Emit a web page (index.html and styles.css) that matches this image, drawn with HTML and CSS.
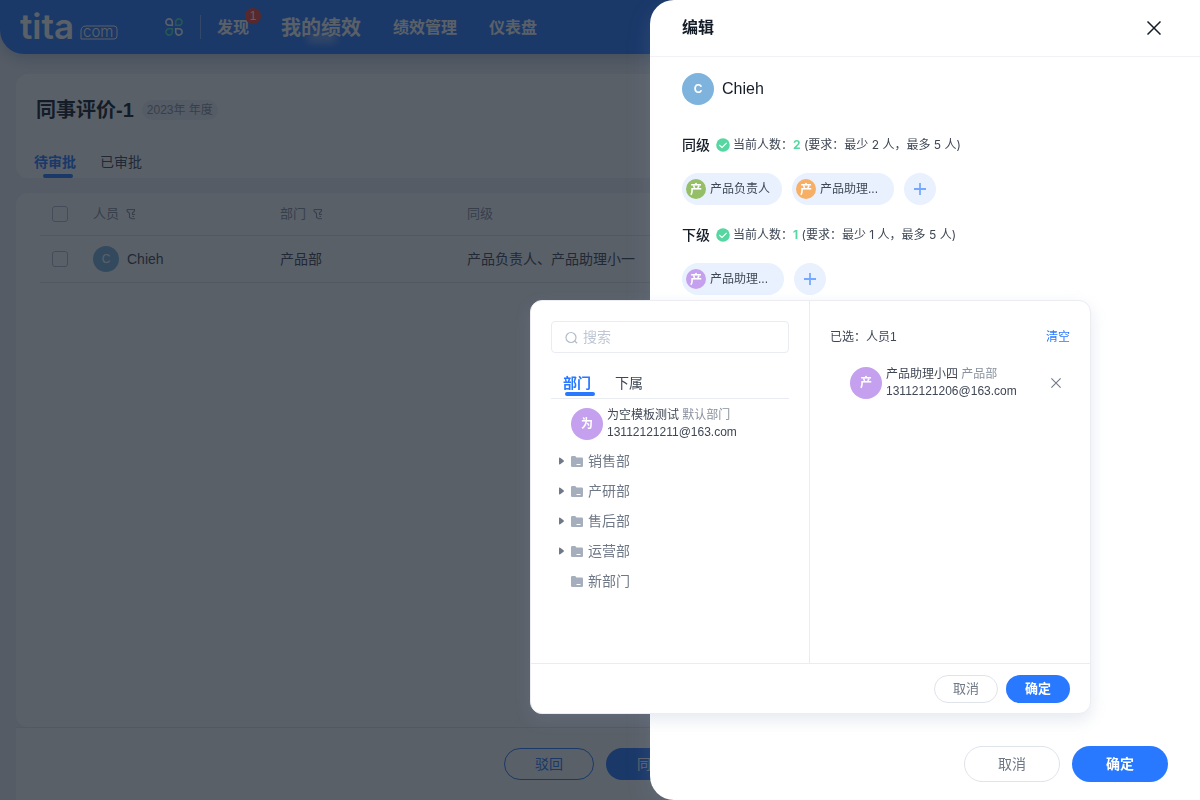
FILE: index.html
```
<!DOCTYPE html>
<html lang="zh-CN">
<head>
<meta charset="utf-8">
<meta name="viewport" content="width=device-width, initial-scale=1">
<title>同事评价</title>
<link rel="stylesheet" href="styles.css">
</head>
<body>
<svg class="sprite" aria-hidden="true">
  <symbol id="filter" viewBox="0 0 10 12"><path d="M1 1.500h7.500v1.500L6.500 5V6.500H9M1 1.500v1.500l2.500 2.500v4l2.500 1.200H9M6.500 8.500H8" fill="none" stroke="currentColor" stroke-width="1.100"/></symbol>
  <symbol id="plus" viewBox="0 0 12 12"><path d="M6 0v12M0 6h12" fill="none" stroke="currentColor" stroke-width="1.800"/></symbol>
  <symbol id="cross" viewBox="0 0 14 14"><path d="M.5.5l13 13M13.500.5l-13 13" fill="none" stroke="currentColor" stroke-width="1.500"/></symbol>
  <symbol id="check" viewBox="0 0 14 14"><circle cx="7" cy="7" r="6.800" fill="#56d7a2"/><path d="M3.300 7l2.700 2.500 4.700-4.700" fill="none" stroke="#fff" stroke-width="1.100"/></symbol>
  <symbol id="folder" viewBox="0 0 12 11"><path d="M0 1.200Q0 0 1.200 0h2.600q.6 0 1 .6l.6.9h5.400Q12 1.500 12 2.700v7.100Q12 11 10.800 11H1.200Q0 11 0 9.800z" fill="#a5aebc"/><path d="M5.500 8.500H9.500" stroke="#fff" stroke-width="1"/></symbol>
  <symbol id="caret" viewBox="0 0 5 8"><path d="M0 1.500Q0 0 1.200.8l3.300 2.400q.8.800 0 1.600L1.200 7.200Q0 8 0 6.500z" fill="#6f7886"/></symbol>
</svg>

<div class="app">
  <header class="topbar">
    <svg class="logo" width="100" height="46" viewBox="0 0 100 46" role="img" aria-label="tita.com">
      <text class="logo-name" x="0" y="35">tita</text>
      <path d="M61 35V27q0-5 5-5h28q3 0 3 3v7q0 3-3 3z" fill="none" stroke="#fff" stroke-width="1"/>
      <text class="logo-com" x="63" y="33">com</text>
    </svg>
    <button class="apps" aria-label="应用">
      <svg width="18" height="18" viewBox="0 0 18 18" fill="none" stroke-width="1.600">
        <path d="M7.300 7.300H4.200A3.200 3.200 0 1 1 7.300 4.200z" stroke="#fff"/>
        <path d="M10.700 7.300V4.200a3.200 3.200 0 1 1 3.200 3.100z" stroke="#4fe0c0"/>
        <path d="M7.300 10.700v3.100a3.200 3.200 0 1 1-3.100-3.100z" stroke="#4fe0c0"/>
        <path d="M10.700 10.700h3.200a3.200 3.200 0 1 1-3.200 3.100z" stroke="#fff"/>
      </svg>
    </button>
    <nav class="nav">
      <a href="#">发现<span class="badge">1</span></a>
      <a href="#" class="current">我的绩效</a>
      <a href="#">绩效管理</a>
      <a href="#">仪表盘</a>
    </nav>
  </header>

  <main class="page">
    <section class="card heading">
      <div class="title-row"><h1>同事评价-1</h1><span class="period">2023年 年度</span></div>
      <div class="tabs">
        <button class="tab active">待审批</button>
        <button class="tab">已审批</button>
      </div>
    </section>
    <section class="card list">
      <table>
        <colgroup><col class="col-check"><col class="col"><col class="col"><col></colgroup>
        <thead><tr>
          <th><input type="checkbox" aria-label="全选"></th>
          <th>人员<svg class="filter" width="10" height="12"><use href="#filter"/></svg></th>
          <th>部门<svg class="filter" width="10" height="12"><use href="#filter"/></svg></th>
          <th>同级</th>
        </tr></thead>
        <tbody><tr>
          <td><input type="checkbox" aria-label="选择 Chieh"></td>
          <td><span class="person"><span class="avatar blue small">C</span>Chieh</span></td>
          <td>产品部</td>
          <td>产品负责人、产品助理小一</td>
        </tr></tbody>
      </table>
    </section>
    <footer class="actions">
      <button class="btn outline">驳回</button>
      <button class="btn solid">同意</button>
    </footer>
  </main>
</div>

<div class="mask">
<aside class="drawer" role="dialog" aria-labelledby="drawer-title">
  <header class="drawer-head">
    <h2 id="drawer-title">编辑</h2>
    <button class="close" aria-label="关闭"><svg width="14" height="14"><use href="#cross"/></svg></button>
  </header>
  <div class="drawer-body">
    <div class="owner"><span class="avatar blue">C</span>Chieh</div>
    <section class="level">
      <div class="level-head"><h3>同级</h3><svg width="14" height="14"><use href="#check"/></svg><p>当前人数：<b>2</b> (要求：最少 2 人，最多 5 人)</p></div>
      <div class="chips">
        <span class="chip"><span class="avatar green tiny">产</span>产品负责人</span>
        <span class="chip cut"><span class="avatar orange tiny">产</span>产品助理...</span>
        <button class="add" aria-label="添加同级"><svg width="12" height="12"><use href="#plus"/></svg></button>
      </div>
    </section>
    <section class="level">
      <div class="level-head"><h3>下级</h3><svg width="14" height="14"><use href="#check"/></svg><p>当前人数：<b>1</b> (要求：最少 1 人，最多 5 人)</p></div>
      <div class="chips">
        <span class="chip cut"><span class="avatar purple tiny">产</span>产品助理...</span>
        <button class="add" aria-label="添加下级"><svg width="12" height="12"><use href="#plus"/></svg></button>
      </div>
    </section>
  </div>
  <footer class="drawer-foot">
    <button class="btn plain">取消</button>
    <button class="btn solid">确定</button>
  </footer>
</aside>
</div>

<div class="picker" role="dialog" aria-label="选择人员">
  <div class="picker-main">
    <div class="source">
      <label class="search">
        <svg width="13" height="13" viewBox="0 0 13 13" fill="none" stroke="#b4bccb" stroke-width="1.200"><circle cx="6" cy="6.500" r="5"/><path d="M9.700 10l2.500 2.300"/></svg>
        <input type="text" placeholder="搜索" aria-label="搜索">
      </label>
      <div class="picker-tabs">
        <button class="tab active">部门</button>
        <button class="tab">下属</button>
      </div>
      <div class="member">
        <span class="avatar purple">为</span>
        <div class="info"><div>为空模板测试 <span>默认部门</span></div><div>13112121211@163.com</div></div>
      </div>
      <ul class="tree">
        <li><svg class="caret" width="5" height="8"><use href="#caret"/></svg><svg width="12" height="11"><use href="#folder"/></svg>销售部</li>
        <li><svg class="caret" width="5" height="8"><use href="#caret"/></svg><svg width="12" height="11"><use href="#folder"/></svg>产研部</li>
        <li><svg class="caret" width="5" height="8"><use href="#caret"/></svg><svg width="12" height="11"><use href="#folder"/></svg>售后部</li>
        <li><svg class="caret" width="5" height="8"><use href="#caret"/></svg><svg width="12" height="11"><use href="#folder"/></svg>运营部</li>
        <li class="leaf"><svg width="12" height="11"><use href="#folder"/></svg>新部门</li>
      </ul>
    </div>
    <div class="chosen">
      <div class="chosen-head"><span>已选：人员1</span><button class="clear">清空</button></div>
      <div class="member">
        <span class="avatar purple">产</span>
        <div class="info"><div>产品助理小四 <span>产品部</span></div><div>13112121206@163.com</div></div>
        <button class="remove" aria-label="移除"><svg width="10" height="10"><use href="#cross"/></svg></button>
      </div>
    </div>
  </div>
  <footer class="picker-foot">
    <button class="btn plain">取消</button>
    <button class="btn solid">确定</button>
  </footer>
</div>
</body>
</html>
```

FILE: styles.css
```
* { box-sizing: border-box; }
body {
  margin: 0;
  font: 14px/20px "Liberation Sans", "Noto Sans CJK SC", sans-serif;
  color: #3f4755;
  background: #f0f2f5;
  overflow: hidden;
}
h1, h2, h3, p, ul { margin: 0; padding: 0; }
button { font: inherit; color: inherit; background: none; border: 0; padding: 0; cursor: pointer; }
svg { display: block; flex: none; }
.sprite { position: absolute; width: 0; height: 0; }

.app { height: 100vh; display: flex; flex-direction: column; }
.topbar {
  flex: none;
  height: 54px;
  display: flex;
  align-items: center;
  padding-left: 20px;
  background: #2879ff;
  border-radius: 0 0 24px 24px;
  box-shadow: 0 4px 16px rgba(40, 80, 160, .3);
}
.logo { fill: #fff; }
.logo-name { font: 600 35px Inter, sans-serif; }
.logo-com { font: 300 15px Inter, sans-serif; }
.apps { margin-left: 45px; padding-right: 17px; border-right: 1px solid rgba(255, 255, 255, .4); height: 24px; }
.nav { display: flex; align-items: center; gap: 32px; margin-left: 16px; padding-top: 2px; }
.nav a { position: relative; color: #fff; text-decoration: none; font-size: 16px; font-weight: 700; }
.nav .current { font-size: 20px; }
.current::after {
  content: ""; position: absolute; left: 26px; bottom: -4px;
  width: 30px; height: 8px; border-radius: 4px;
  background: rgba(255, 255, 255, .5); filter: blur(4px);
}
.badge {
  position: absolute; top: -10px; right: -12px;
  width: 16px; height: 16px;
  border-radius: 50%;
  background: #f5483b;
  font-size: 12px; line-height: 16px; font-weight: 400; text-align: center;
}

.page { flex: 1; display: flex; flex-direction: column; padding: 20px 16px 0; min-height: 0; }
.card { background: #fff; border-radius: 12px; }
.heading { padding: 22px 20px 0; margin-bottom: 15px; }
.title-row { display: flex; align-items: center; gap: 8px; }
h1 { font-size: 20px; line-height: 28px; font-weight: 600; color: #141c28; }
.period { padding: 0 5px; line-height: 20px; border-radius: 10px; font-size: 12px; background: #f0f2f5; color: #89919f; }
.tabs { display: flex; gap: 24px; margin: 28px 0 0 -2px; }
.tab { position: relative; padding-bottom: 6px; line-height: 20px; }
.tab.active { color: #2879ff; font-weight: 700; }
.tab.active::after {
  content: ""; position: absolute; bottom: 0; left: 50%;
  width: 30px; height: 4px; margin-left: -12px;
  border-radius: 2px; background: #2879ff;
}
.list { flex: 1; padding: 0 24px; overflow: hidden; }
table { width: 100%; table-layout: fixed; border-collapse: collapse; }
.col-check { width: 53px; }
.col { width: 187px; }
th, td { padding: 0; text-align: left; border-bottom: 1px solid #e1e6ee; }
th { height: 42px; font-weight: 400; font-size: 13px; color: #89919f; }
td { height: 47px; color: #3f4755; }
th input, td input { appearance: none; display: block; margin: 0 0 0 12px; width: 16px; height: 16px; border: 1px solid #b4bccb; border-radius: 3px; }
.filter { display: inline-block; margin-left: 7px; vertical-align: -2px; }
.person { display: flex; align-items: center; gap: 8px; }
.actions {
  flex: none;
  height: 73px;
  display: flex;
  justify-content: center;
  align-items: center;
  gap: 12px;
  background: #fff;
  border-top: 1px solid #e1e6ee;
}
.btn { border-radius: 18px; text-align: center; }
.solid { background: #2879ff; color: #fff; font-weight: 700; }
.outline { border: 1px solid #2879ff; color: #2879ff; }
.plain { border: 1px solid #dfe3ea; color: #6f7886; background: #fff; }
.actions .btn { width: 90px; height: 32px; font-weight: 400; }

.avatar {
  flex: none;
  width: 32px; height: 32px;
  border-radius: 50%;
  color: #fff; font-size: 12px; line-height: 33px; font-weight: 700; text-align: center;
}
.small { width: 26px; height: 26px; line-height: 26px; font-weight: 400; }
.tiny { width: 20px; height: 20px; line-height: 22px; }
.blue { background: #7eb3de; }
.green { background: #94bf66; }
.orange { background: #f7ae65; }
.purple { background: #c4a0ee; }

.mask { position: fixed; inset: 0; display: flex; justify-content: flex-end; background: rgba(20, 28, 40, .7); }
.drawer {
  width: 550px;
  display: flex;
  flex-direction: column;
  background: #fff;
  border-radius: 24px 0 0 24px;
  box-shadow: 0 8px 24px rgba(127, 145, 180, .2);
}
.drawer-head { display: flex; justify-content: space-between; align-items: center; height: 57px; padding: 0 39px 0 32px; border-bottom: 1px solid #f0f2f5; }
h2 { font-size: 16px; line-height: 24px; color: #141c28; }
.close { color: #141c28; }
.drawer-body { flex: 1; padding: 16px 32px; }
.owner { display: flex; align-items: center; gap: 8px; font-size: 16px; color: #141c28; margin-bottom: 30px; }
.level { margin-bottom: 20px; }
.level-head { display: flex; align-items: center; height: 20px; margin-bottom: 18px; }
h3 { font-size: 14px; font-weight: 500; color: #141c28; margin-right: 6px; }
.level-head p { margin-left: 3px; font: 12px/20px Inter, "Noto Sans CJK SC", sans-serif; }
.level-head b { color: #56d7a2; }
.chips { display: flex; gap: 10px; }
.chip { display: flex; align-items: center; gap: 4px; height: 32px; padding: 0 12px 0 4px; border-radius: 16px; background: #e9f1ff; font-size: 12px; }
.cut { width: 102px; }
.add { width: 32px; height: 32px; display: grid; place-items: center; border-radius: 50%; background: #e9f1ff; color: #75a9ff; }
.drawer-foot { display: flex; justify-content: flex-end; gap: 12px; padding: 18px 32px; }
.drawer-foot .btn { width: 96px; height: 36px; }

.picker {
  position: fixed; top: 300px; right: 109px;
  width: 561px;
  background: #fff;
  border: 1px solid #ebedf2;
  border-radius: 12px;
  box-shadow: 0 6px 16px rgba(127, 145, 180, .2);
}
.picker-main { display: grid; grid-template-columns: 279px 1fr; min-height: 362px; }
.source { padding: 20px; border-right: 1px solid #e9ecf0; }
.search { display: flex; align-items: center; gap: 5px; height: 32px; padding: 0 13px; border: 1px solid #e9ecf0; border-radius: 4px; }
.search input { flex: 1; min-width: 0; border: 0; outline: 0; padding: 0; font: inherit; background: none; }
.search input::placeholder { color: #bfc7d5; }
.picker-tabs { display: flex; gap: 24px; padding: 20px 12px 2px; border-bottom: 1px solid #e9ecf0; }
.picker-tabs .tab { padding-bottom: 3px; }
.member { display: flex; align-items: center; gap: 4px; padding-left: 20px; }
.source .member { margin-top: 8px; }
.info { font-size: 12px; line-height: 17px; }
.info span { color: #89919f; }
.tree { list-style: none; margin-top: 5px; }
.tree li { display: flex; align-items: center; gap: 5px; height: 30px; padding-left: 8px; color: #6f7886; }
.caret { margin-right: 2px; }
.leaf { margin-left: 12px; }
.chosen { padding: 26px 20px; font-size: 12px; }
.chosen-head { display: flex; justify-content: space-between; margin-bottom: 19px; }
.clear { color: #2879ff; }
.remove { margin: 0 9px 0 auto; color: #6f7886; }
.picker-foot { display: flex; justify-content: flex-end; gap: 8px; padding: 11px 20px 10px; border-top: 1px solid #e9ecf0; }
.picker-foot .btn { width: 64px; height: 28px; font-size: 13px; }
```
